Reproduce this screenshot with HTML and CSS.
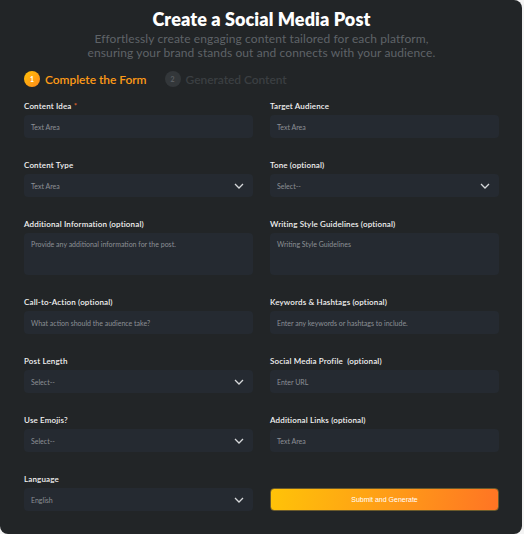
FILE: index.html
```html
<!DOCTYPE html>
<html lang="en">
<head>
<meta charset="utf-8">
<link rel="stylesheet" href="styles.css">
</head>
<body>
<div class="card">
  <h1 class="title">Create a Social Media Post</h1>
  <p class="subtitle">Effortlessly create engaging content tailored for each platform,<br>ensuring your brand stands out and connects with your audience.</p>
  <div class="steps">
    <div class="step active"><span class="dot">1</span><span class="step-label">Complete the Form</span></div>
    <div class="step"><span class="dot">2</span><span class="step-label">Generated Content</span></div>
  </div>
  <form class="form">
    <div class="field">
      <label class="label">Content Idea <span class="req">*</span></label>
      <div class="input">Text Area</div>
    </div>
    <div class="field">
      <label class="label">Target Audience</label>
      <div class="input">Text Area</div>
    </div>
    <div class="field">
      <label class="label">Content Type</label>
      <div class="input select">Text Area<svg class="chev" viewBox="0 0 10 6"><path d="M1 1l4 4 4-4"/></svg></div>
    </div>
    <div class="field">
      <label class="label">Tone (optional)</label>
      <div class="input select">Select--<svg class="chev" viewBox="0 0 10 6"><path d="M1 1l4 4 4-4"/></svg></div>
    </div>
    <div class="field">
      <label class="label">Additional Information (optional)</label>
      <div class="input area">Provide any additional information for the post.</div>
    </div>
    <div class="field">
      <label class="label">Writing Style Guidelines (optional)</label>
      <div class="input area">Writing Style Guidelines</div>
    </div>
    <div class="field">
      <label class="label">Call-to-Action (optional)</label>
      <div class="input">What action should the audience take?</div>
    </div>
    <div class="field">
      <label class="label">Keywords &amp; Hashtags (optional)</label>
      <div class="input">Enter any keywords or hashtags to include.</div>
    </div>
    <div class="field">
      <label class="label">Post Length</label>
      <div class="input select">Select--<svg class="chev" viewBox="0 0 10 6"><path d="M1 1l4 4 4-4"/></svg></div>
    </div>
    <div class="field">
      <label class="label">Social Media Profile&nbsp; (optional)</label>
      <div class="input">Enter URL</div>
    </div>
    <div class="field">
      <label class="label">Use Emojis?</label>
      <div class="input select">Select--<svg class="chev" viewBox="0 0 10 6"><path d="M1 1l4 4 4-4"/></svg></div>
    </div>
    <div class="field">
      <label class="label">Additional Links (optional)</label>
      <div class="input">Text Area</div>
    </div>
    <div class="field">
      <label class="label">Language</label>
      <div class="input select">English<svg class="chev" viewBox="0 0 10 6"><path d="M1 1l4 4 4-4"/></svg></div>
    </div>
    <div class="field field-btn">
      <button type="button" class="submit">Submit and Generate</button>
    </div>
  </form>
</div>
</body>
</html>
```

FILE: styles.css
```css
* { box-sizing: border-box; }
html, body { margin: 0; padding: 0; background: #f4f4f4; }
body { font-family: Lato, "Noto Sans", sans-serif; }

.card {
  width: 522px;
  height: 534px;
  background: #222527;
  border-radius: 0 8px 8px 8px;
  padding: 8px 23px 0 24px;
  color: #fff;
}

.title {
  margin: 0;
  text-align: center;
  font-size: 18px;
  line-height: 22px;
  font-weight: 800;
  letter-spacing: 0.1px;
}

.subtitle {
  margin: 2px 0 0;
  text-align: center;
  font-size: 12px;
  line-height: 14px;
  color: #5f6367;
  letter-spacing: 0.1px;
}

.steps {
  display: flex;
  gap: 18px;
  margin-top: 11px;
  height: 16px;
  align-items: center;
}
.step { display: flex; align-items: center; gap: 5px; }
.dot {
  width: 16px; height: 16px; border-radius: 50%;
  display: flex; align-items: center; justify-content: center;
  font-size: 7px; font-weight: 700;
  background: #33373a; color: #5a5e62;
}
.step-label { font-size: 12px; color: #3b3f42; font-weight: 600; letter-spacing: -0.05px; }
.step.active .dot { background: linear-gradient(135deg, #ffc107, #ff8a1c); color: #fff; }
.step.active .step-label { color: #fd9a17; }

.form {
  display: grid;
  grid-template-columns: 229px 229px;
  column-gap: 17px;
  row-gap: 22px;
  margin-top: 14px;
}
.field { display: flex; flex-direction: column; }
.label {
  font-size: 8px;
  line-height: 10px;
  font-weight: 600;
  color: #f2f2f2;
  margin-bottom: 4px;
  white-space: pre;
  letter-spacing: 0.15px;
}
.req { color: #e5672a; }
.input {
  height: 23px;
  background: #252a31;
  border-radius: 4px;
  padding: 0 7px;
  display: flex;
  align-items: center;
  font-size: 7px;
  color: #8c9095;
}
.input.area { height: 42px; align-items: flex-start; padding-top: 7px; }
.select { justify-content: space-between; }
.chev { width: 10px; height: 6px; fill: none; stroke: #d6d8da; stroke-width: 1.3; margin-right: 2px; }

.field-btn { justify-content: flex-end; }
.submit {
  height: 23px;
  border: 1px solid #6b5a2a;
  border-radius: 4px;
  background: linear-gradient(100deg, #ffc308 0%, #ff9a18 55%, #ff7424 100%);
  color: #fff;
  font-family: "Liberation Sans", Arial, sans-serif;
  font-size: 7px;
  padding: 0;
}
```
